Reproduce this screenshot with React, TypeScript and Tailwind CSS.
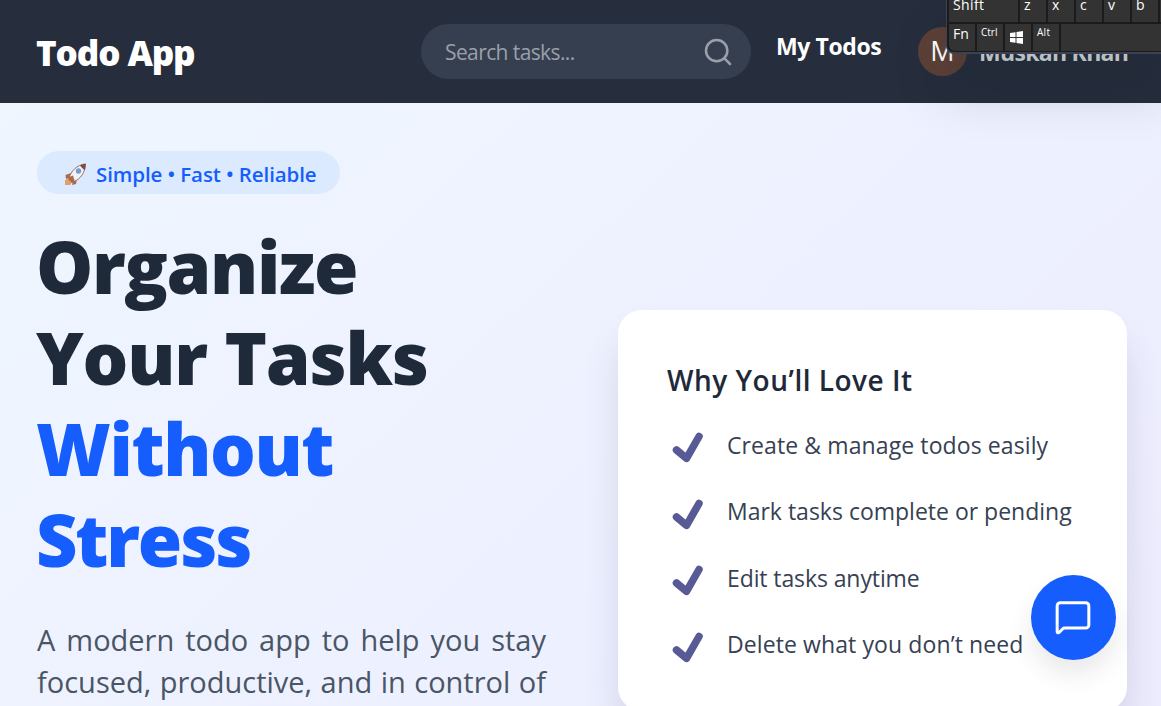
import { MessageSquare, Search } from "lucide-react";
import clsx from "clsx";

const features = [
  { label: "Create & manage todos easily", tracking: "tracking-[0.1px]" },
  { label: "Mark tasks complete or pending", tracking: "tracking-[0px]" },
  { label: "Edit tasks anytime", tracking: "tracking-[-0.1px]" },
  { label: "Delete what you don’t need", tracking: "tracking-[0.1px]" },
];

function Navbar() {
  return (
    <header className="flex h-[103px] items-center bg-[#262d3d] pl-[36px] text-white">
      <div className="w-[385px] shrink-0 pt-0.5 text-[35px] leading-[48px] font-extrabold tracking-[-1.1px] whitespace-nowrap">
        Todo App
      </div>
      <div className="flex h-[55px] w-[330px] shrink-0 items-center justify-between rounded-full bg-[#353f50] pr-[17px] pl-6">
        <span className="pt-[3px] text-[21px] tracking-[-0.6px] text-[#9b9fa9]">Search tasks...</span>
        <Search className="size-8 text-[#9b9fa9]" strokeWidth={1.9} />
      </div>
      <a className="ml-[25px] w-[142px] shrink-0 pb-[12px] text-[23px] leading-8 font-bold tracking-[-0.4px] whitespace-nowrap">
        My Todos
      </a>
      <div className="flex shrink-0 items-center gap-3">
        <div className="flex size-[49px] items-center justify-center rounded-full bg-[#5d4037] text-[27px]">
          M
        </div>
        <span className="text-[23px] leading-8 font-bold tracking-[-0.7px] whitespace-nowrap text-[#d5d7dc]">
          Muskan Khan
        </span>
      </div>
    </header>
  );
}

function Hero() {
  return (
    <section>
      <div className="inline-flex h-[43px] w-[303px] items-center rounded-full bg-[#dbeafe] pt-1 pl-[27px] text-[20.500px] font-semibold whitespace-nowrap text-[#155dfc]">
        <Rocket />
        <span className="ml-[9px] tracking-[-0.1px]">Simple • Fast • Reliable</span>
      </div>
      <h1 className="mt-[27px] -ml-px text-[72px] leading-[91px] font-extrabold text-[#1e2939]">
        <span className="block tracking-[-1.4px]">Organize</span>
        <span className="block tracking-[-1.2px]">Your Tasks</span>
        <span className="block tracking-[-1.4px] text-[#155dfc]">Without</span>
        <span className="block tracking-[-2.2px] text-[#155dfc]">Stress</span>
      </h1>
      <p className="mt-[34px] text-justify text-[29px] leading-[42px] text-[#4a5565]">
        A modern todo app to help you stay focused, productive, and in control of your day.
      </p>
    </section>
  );
}

function Rocket() {
  return (
    <svg width="23" height="23" viewBox="0 0 23 23" className="shrink-0">
      <path d="M7 10 1.5 12 2 16l6-2zM13 16l-1 5-4 1 2-7z" fill="#a86b4d" />
      <path d="M1 22v-5l5-2 3 3-3 4z" fill="#e0a06c" />
      <path d="M5 15C7 8 13 2 21 1c.6 8-4 15-12 18z" fill="#f2f2f2" stroke="#a0705c" strokeWidth="1" />
      <path d="M16 2.3 22 .5 21 7c-2-.8-4-2.600-5-4.700z" fill="#7d4a45" />
      <path d="m5 14 4-1.500 2 6.500-3 1-4-4z" fill="#a86b4d" />
      <circle cx="14.500" cy="8" r="2.700" fill="#6ba0d8" />
    </svg>
  );
}

function Check() {
  return (
    <svg width="32" height="32" viewBox="0 0 32 32" className="shrink-0">
      <path
        d="M4.500 19 14.500 27.300 27 5.500"
        fill="none"
        stroke="#575a94"
        strokeWidth="7.500"
        strokeLinecap="round"
        strokeLinejoin="round"
      />
    </svg>
  );
}

function FeatureCard() {
  return (
    <section className="mt-[159px] h-[401px] rounded-[24px] bg-white pt-[50px] pl-[49px] shadow-[0_26px_40px_-8px_rgba(50,55,80,0.2)]">
      <h2 className="text-[28px] leading-10 font-semibold tracking-[0.500px] whitespace-nowrap text-[#1e2939]">
        Why You’ll Love It
      </h2>
      <ul className="mt-[12px]">
        {features.map((feature) => (
          <li key={feature.label} className="flex h-[66.600px] items-center text-[#364153]">
            <span className="mt-1 ml-[5px]">
              <Check />
            </span>
            <span className={clsx("ml-[23px] pb-px text-[23px] whitespace-nowrap", feature.tracking)}>
              {feature.label}
            </span>
          </li>
        ))}
      </ul>
    </section>
  );
}

function Key({ label, small, className }: { label: string; small?: boolean; className: string }) {
  return (
    <div
      className={clsx(
        "h-[27px] shrink-0 bg-[#333333] pl-1",
        small ? "text-[10px] leading-[16px]" : "text-[14px] leading-[19px]",
        className,
      )}
    >
      {label}
    </div>
  );
}

function OnScreenKeyboard() {
  return (
    <div className="absolute top-0 right-0 h-[54px] w-[215px] overflow-hidden rounded-bl-lg border-b-2 border-l border-[#3b4254] bg-[#1b1b1b] pl-0.5 text-white">
      <div className="-mt-[5px] flex gap-0.5">
        <Key label="Shift" className="w-[69px] tracking-[0.4px]" />
        {["z", "x", "c", "v", "b"].map((letter) => (
          <Key key={letter} label={letter} className="w-[26px]" />
        ))}
        <div className="h-[27px] w-[26px] shrink-0 bg-[#333333]" />
      </div>
      <div className="mt-0.5 flex gap-0.5">
        <Key label="Fn" className="w-[26px] rounded-bl-md" />
        <Key label="Ctrl" small className="w-[26px]" />
        <div className="flex h-[27px] w-[26px] shrink-0 items-center justify-center bg-[#333333]">
          <svg width="13" height="13" viewBox="0 0 13 13" fill="#fff" className="-mt-px -ml-1">
            <path d="M0 2l5.500-.8V6H0zM6.500 1 13 0v6H6.500zM0 7h5.500v4.800L0 11zM6.500 7H13v6l-6.500-1z" />
          </svg>
        </div>
        <Key label="Alt" small className="w-[26px] tracking-[0.3px]" />
        <div className="h-[27px] w-[110px] shrink-0 bg-[#333333]" />
      </div>
    </div>
  );
}

export default function App() {
  return (
    <div className="relative h-[706px] w-[1161px] overflow-hidden bg-[#eff6ff] font-['Open_Sans','Noto_Sans',sans-serif]">
      <Navbar />
      <main className="grid h-[1100px] grid-cols-[509px_509px] items-start gap-x-[72px] bg-linear-to-br from-[#eff6ff] via-[#edf0ff] to-[#ede7fd] px-[37px] pt-12">
        <Hero />
        <FeatureCard />
      </main>
      <div className="absolute top-0 right-0 h-[53px] w-[214px] rounded-bl-lg shadow-[0_36px_50px_4px_rgba(15,35,35,0.17)]" />
      <OnScreenKeyboard />
      <button className="absolute top-[575px] left-[1031px] flex size-[85px] items-center justify-center rounded-full bg-[#155dfc] pr-0.5 pb-0.5 text-white shadow-[0_14px_24px_rgba(40,40,40,0.1)]">
        <MessageSquare className="size-[38px]" strokeWidth={1.900} />
      </button>
    </div>
  );
}
